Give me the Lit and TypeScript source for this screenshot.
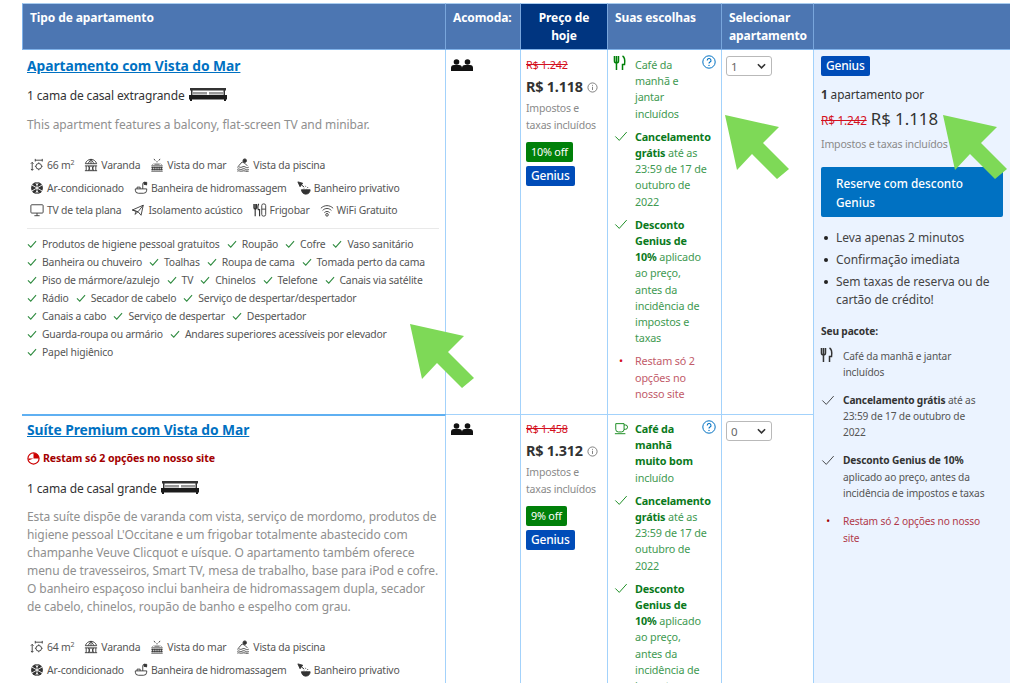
import { LitElement, html, css, svg } from "lit";
import { customElement } from "lit/decorators.js";

const ICONS: Record<string, any> = {
  size: svg`<path d="M2.500 5v9M1 6.500 2.500 5 4 6.500M1 12.500 2.500 14 4 12.500M6 2.500h8M6 1v3M14 1v3"/><circle cx="10" cy="9.500" r="3.200"/><path d="M10 5v1.300M10 12.700V14M5.600 9.500h1.200M13.200 9.500h1.200"/>`,
  balcony: svg`<path d="M1.500 6.500C2.500 3.500 5 1.500 8 1.500s5.500 2 6.500 5zM4.500 6.500 8 1.500l3.500 5M8 1.500v5M1 9h14M1 14.500h14M2.500 9v5.500M5 9l2 5.500M7 9l-2 5.500M9 9l2 5.500M11 9l-2 5.500M13.500 9v5.500"/>`,
  sea: svg`<path d="M4.500 1 6 3M11.500 1 10 3M8 3.500v1.500M5 7h6M1.500 9h13M1.500 11h13M1.500 13h13M1.500 15h13M3 10v4M5.500 10v4M8 10v4M10.500 10v4M13 10v4"/><path d="M3 7.500l1-1M13 7.500l-1-1"/>`,
  pool: svg`<circle cx="10" cy="3" r="2" fill="currentColor"/><path d="M3 9 7 4.500l3 1.500 3 3M1.500 10.500c2-1.500 3 1 5 0s3-1 4.500 0 2.500.500 3.500 0M1.500 13c2-1.500 3 1 5 0s3-1 4.500 0 2.500.500 3.500 0M1.500 15c2-1 3 .500 5 0s3-.500 4.500 0 2.500.300 3.500 0"/>`,
  snow: svg`<circle cx="8" cy="8" r="6.800" fill="currentColor" stroke="none"/><path stroke="#fff" d="M8 1.500v13M2.300 4.700l11.400 6.600M13.700 4.700 2.300 11.300M6.500 3 8 4.500 9.500 3M6.500 13 8 11.500 9.500 13"/>`,
  tub: svg`<path d="M1.500 9h13v1.500a3.500 3.500 0 0 1-3.500 3.500H5a3.500 3.500 0 0 1-3.500-3.500zM10 9V3.500a2 2 0 0 1 4 0V5M3.500 9V7h3.500v2"/><path d="M11.500 1.500h3v2.500h-3z" fill="currentColor"/>`,
  bath: svg`<path d="M1 1l5.500 1.500-3 4z" fill="currentColor"/><path d="M3 2l5 5"/><path d="M5 10h10c0 2.500-1.500 5-5 5s-4.500-2.500-5-5z" fill="currentColor"/><path d="M7 6l.500 1M9.500 5.500l.500 1M12 7l.500 1M8 8.500v.500M11 9v.500"/>`,
  tv: svg`<rect x="1" y="2" width="14" height="9.500" rx="1"/><path d="M5 14.500h6M8 11.500v3"/>`,
  sound: svg`<path d="M1.500 8 14 2.500 11.500 14 8 10zM14 2.500 8 10M1.500 8 6 9.500 4.500 13 8 10"/>`,
  fridge: svg`<path d="M1 1v4.500a1.500 1.500 0 0 0 3 0V1M2.500 1v14M6.500 1c-1 2-1 5-.500 6.500H7.500V15" stroke-width="1.300"/><rect x="10" y="1" width="4.500" height="14" rx="2"/><path d="M10 7h4.500"/>`,
  wifi: svg`<path d="M1 6c4-4 10-4 14 0M3 8.500c3-3 7-3 10 0M5 11c2-1.800 4-1.800 6 0"/><circle cx="8" cy="13.500" r="1.500"/>`,
  food: svg`<path d="M1.500 1v5a2 2 0 0 0 4 0V1M3.500 1v14" stroke-width="1.500"/><path d="M9.500 1c2 1 2.500 5 2 8.500H9.500V15" stroke-width="1.500"/>`,
  cup: svg`<path d="M2 3h9.500v6.500a3 3 0 0 1-3 3h-3.500a3 3 0 0 1-3-3zM11.500 4.500h1.500a1.500 1.500 0 0 1 0 5h-1.500M1 14.500h12"/>`,
  check: svg`<path d="M1.500 8.500 6 13 14.500 3.500"/>`,
};

const ic = (name: string, cls = "ic") =>
  html`<svg class=${cls} viewBox="0 0 16 16" fill="none" stroke="currentColor" stroke-width="1" aria-hidden="true">${ICONS[name]}</svg>`;

const FACILITY_ROWS = (m2: string): [string, any][][] => [
  [["size", html`${m2} m<sup>2</sup>`], ["balcony", "Varanda"], ["sea", "Vista do mar"], ["pool", "Vista da piscina"]],
  [["snow", "Ar-condicionado"], ["tub", "Banheira de hidromassagem"], ["bath", "Banheiro privativo"]],
  [["tv", "TV de tela plana"], ["sound", "Isolamento acústico"], ["fridge", "Frigobar"], ["wifi", "WiFi Gratuito"]],
];

const AMENITIES = [
  ["Produtos de higiene pessoal gratuitos", "Roupão", "Cofre", "Vaso sanitário"],
  ["Banheira ou chuveiro", "Toalhas", "Roupa de cama", "Tomada perto da cama"],
  ["Piso de mármore/azulejo", "TV", "Chinelos", "Telefone", "Canais via satélite"],
  ["Rádio", "Secador de cabelo", "Serviço de despertar/despertador"],
  ["Canais a cabo", "Serviço de despertar", "Despertador"],
  ["Guarda-roupa ou armário", "Andares superiores acessíveis por elevador"],
  ["Papel higiênico"],
];

const bedIcon = html`<svg class="bed" viewBox="0 0 38 14" aria-hidden="true">
  <path d="M1 1h36v2.500H1z" fill="#333"/><path d="M2 3h1.500v5H2zM34.500 3H36v5h-1.500z" fill="#333"/>
  <path d="M4 5h14v2.500H4zM20 5h14v2.500H20z" fill="#999"/>
  <path d="M0 8h38v4.500H0z" fill="#1c1c1c"/><path d="M1 12h2v2H1zM35 12h2v2h-2z" fill="#1c1c1c"/>
</svg>`;

const peopleIcon = html`<svg class="people" viewBox="0 0 22 12" aria-hidden="true" fill="#111">
  <circle cx="5.500" cy="3" r="2.800"/><path d="M0 12V9a3 3 0 0 1 3-3h5a3 3 0 0 1 3 3v3z"/>
  <circle cx="16.500" cy="3" r="2.800"/><path d="M11 12V9a3 3 0 0 1 3-3h5a3 3 0 0 1 3 3v3z"/>
</svg>`;

const chevron = html`<svg class="chev" viewBox="0 0 10 6" fill="none" stroke="#333" stroke-width="1.800" aria-hidden="true"><path d="M1 1l4 4 4-4"/></svg>`;

const helpIcon = html`<svg class="help" viewBox="0 0 14 14" fill="none" aria-hidden="true">
  <circle cx="7" cy="7" r="6.200" stroke="#0071c2"/>
  <path d="M5.200 5.400a1.900 1.900 0 1 1 2.800 1.700c-.7.400-1 .7-1 1.500" stroke="#0071c2" stroke-width="1.100"/>
  <circle cx="7" cy="10.400" r=".7" fill="#0071c2"/>
</svg>`;

const infoIcon = html`<svg class="info" viewBox="0 0 12 12" fill="none" aria-hidden="true">
  <circle cx="6" cy="6" r="5" stroke="#777"/><path d="M6 5.200v3.500" stroke="#777"/><circle cx="6" cy="3.500" r=".6" fill="#777"/>
</svg>`;

@customElement("app-root")
export class AppRoot extends LitElement {
  static styles = css`
    :host {
      display: block;
      height: 683px;
      overflow: hidden;
      background: #fff;
      font-family: "Noto Sans", "Open Sans", sans-serif;
      color: #333;
      position: relative;
    }
    .table {
      display: grid;
      grid-template-columns: 424px 75px 87px 114px 92px 196px;
      grid-template-rows: 47px 364px 400px;
      margin: 3px 0 0 22px;
      width: 988px;
    }
    .th {
      background: #4c76b2;
      color: #fff;
      font-weight: 700;
      font-size: 12px;
      line-height: 18px;
      letter-spacing: -0.1px;
      padding: 5px 7px 0;
      border-top: 1px solid #a9cdf0;
      border-right: 1px solid #79a6dc;
      border-bottom: 1px solid #7fb2ea;
    }
    .th.first { border-left: 1px solid #7fb2ea; }
    .th.today { background: #003580; text-align: center; }
    .th.last { border-right: none; }
    .td {
      border-right: 1px solid #a3d2fb;
      min-width: 0;
      overflow: hidden;
    }
    .next { border-top: 1px solid #a3d2fb; }
    .room { padding: 6px 6px 0 5px; }
    .room.next { border-top: 2px solid #5fb0f2; padding-top: 4px; }
    .title {
      display: block;
      color: #0071c2;
      font-weight: 700;
      font-size: 13.800px;
      line-height: 20px;
      letter-spacing: -0.05px;
      text-decoration: underline;
    }
    .alert {
      display: flex;
      align-items: center;
      gap: 3px;
      margin-top: 10px;
      color: #a30000;
      font-weight: 700;
      font-size: 10.600px;
      line-height: 16px;
      letter-spacing: -0.1px;
    }
    .pie { width: 13px; height: 13px; flex: none; }
    .bed-line {
      display: flex;
      align-items: center;
      gap: 4px;
      margin-top: 10px;
      font-size: 12px;
      line-height: 20px;
      letter-spacing: -0.13px;
    }
    .alert + .bed-line { margin-top: 13px; }
    .bed { width: 38px; height: 14px; flex: none; margin-top: -4px; }
    .desc {
      margin: 10px 0 0;
      color: #8f8f8f;
      font-size: 12px;
      line-height: 18px;
      letter-spacing: -0.08px;
    }
    .alert ~ .desc { margin-top: 9px; }
    .facilities { margin-top: 20px; }
    .f-row {
      display: flex;
      gap: 10px;
      padding-left: 3px;
      height: 22.500px;
      align-items: center;
      font-size: 10.400px;
      letter-spacing: -0.2px;
      color: #555;
      white-space: nowrap;
    }
    .f-item { display: flex; align-items: center; gap: 3px; }
    .f-item sup { font-size: 7px; line-height: 0; vertical-align: super; }
    .ic { width: 14px; height: 14px; flex: none; color: #333; }
    hr {
      margin: 6px 0 0;
      border: 0;
      border-top: 1px solid #e9e9e9;
    }
    .amen { margin-top: 6px; }
    .a-row {
      display: flex;
      gap: 7px;
      height: 18px;
      align-items: center;
      font-size: 10.400px;
      letter-spacing: -0.2px;
      color: #555;
      white-space: nowrap;
    }
    .a-item { display: flex; align-items: center; gap: 5px; }
    .a-check { width: 10px; height: 10px; flex: none; color: #2d8a3e; stroke-width: 1.700; }
    .people-cell { padding: 9px 0 0 5px; }
    .people-cell.next { padding-top: 8px; }
    .people { display: block; width: 22px; height: 12px; }
    .price { padding: 6px 0 0 5px; }
    .price.next { padding-top: 5px; }
    .old {
      color: #d4111e;
      text-decoration: line-through;
      font-size: 10.800px;
      line-height: 18px;
      letter-spacing: -0.2px;
    }
    .now {
      display: flex;
      align-items: center;
      gap: 4px;
      margin-top: 2px;
      font-size: 14.400px;
      font-weight: 700;
      line-height: 22px;
      letter-spacing: -0.2px;
      white-space: nowrap;
    }
    .info { width: 11px; height: 11px; flex: none; }
    .taxes {
      margin-top: 2px;
      color: #8a8a8a;
      font-size: 10.500px;
      line-height: 17px;
      letter-spacing: -0.2px;
    }
    .off {
      display: block;
      width: fit-content;
      margin-top: 8px;
      padding: 0 5px;
      background: #008009;
      border-radius: 2px;
      color: #fff;
      font-size: 10.800px;
      line-height: 20px;
      letter-spacing: -0.2px;
    }
    .genius {
      display: block;
      width: fit-content;
      background: #004cb8;
      border-radius: 2px;
      color: #fff;
      font-size: 12px;
      font-weight: 500;
      line-height: 20px;
      padding: 0 5px;
      letter-spacing: -0.2px;
    }
    .price .genius { margin-top: 4px; }
    .choices { position: relative; padding: 7px 2px 0 6px; }
    .choices.next { padding-top: 6px; }
    .help { position: absolute; top: 5px; right: 5px; width: 14px; height: 14px; }
    .choice {
      display: flex;
      gap: 7px;
      margin-bottom: 7px;
      color: #3f9a52;
      font-size: 10.800px;
      line-height: 16.200px;
      letter-spacing: -0.15px;
      white-space: nowrap;
    }
    .choice b { color: #0a7a1c; }
    .choice .ico {
      width: 14px;
      height: 14px;
      flex: none;
      color: #008009;
    }
    .ico.food { transform: translateY(-1px) scale(1.15); }
    .choice .bullet {
      width: 14px;
      flex: none;
      text-align: center;
      color: #d4111e;
    }
    .choice.red { color: #c25b6a; }
    .sel { padding: 6px 0 0 4px; }
    .select-wrap { position: relative; width: 46px; height: 20px; }
    select {
      appearance: none;
      width: 46px;
      height: 20px;
      border: 1px solid #b9b9b9;
      border-radius: 3px;
      background: #fff;
      color: #666;
      font: 11.500px "Noto Sans", sans-serif;
      padding: 0 0 0 4px;
      display: block;
    }
    .chev { position: absolute; right: 6px; top: 7px; width: 9px; height: 6px; pointer-events: none; }
    .panel {
      grid-row: 2 / span 2;
      grid-column: 6;
      background: #ebf3ff;
      padding: 6px 7px 0 7px;
      overflow: hidden;
    }
    .qty {
      margin-top: 8px;
      font-size: 11.800px;
      line-height: 20px;
      letter-spacing: -0.1px;
    }
    .totals { display: flex; align-items: baseline; gap: 4px; white-space: nowrap; margin-top: 3px; }
    .totals .struck {
      color: #d4111e;
      font-size: 11.800px;
      text-decoration: line-through;
      letter-spacing: -0.2px;
    }
    .totals .amount { font-size: 16.800px; line-height: 24px; letter-spacing: 0; }
    .incl {
      margin-top: 5px;
      color: #8a8a8a;
      font-size: 10.600px;
      line-height: 16px;
      letter-spacing: -0.2px;
      white-space: nowrap;
    }
    .cta {
      margin-top: 15px;
      width: 182px;
      height: 50px;
      box-sizing: border-box;
      padding: 7px 15px;
      background: #0071c2;
      border-radius: 2px;
      color: #fff;
      font-size: 11.800px;
      font-weight: 500;
      line-height: 19px;
      letter-spacing: 0;
    }
    ul.why {
      list-style: none;
      margin: 12px 0 0;
      padding: 0 0 0 15px;
      font-size: 12px;
      line-height: 17.500px;
      letter-spacing: -0.05px;
      color: #444;
    }
    ul.why li { position: relative; margin-bottom: 4.500px; }
    ul.why li::before {
      content: "";
      position: absolute;
      left: -12px;
      top: 7px;
      width: 4px;
      height: 4px;
      border-radius: 50%;
      background: #222;
    }
    .pack-title {
      margin-top: 15px;
      font-size: 10.200px;
      font-weight: 700;
      line-height: 16px;
      letter-spacing: -0.15px;
    }
    .pack {
      display: flex;
      gap: 8px;
      color: #555;
      font-size: 10.200px;
      line-height: 16.300px;
      letter-spacing: -0.15px;
      margin-bottom: 12px;
      white-space: nowrap;
    }
    .pack:first-child { margin-bottom: 11px; }
    .pack b { color: #333; }
    .pack .ico { width: 14px; height: 14px; flex: none; color: #333; margin-top: 1px; }
    .pack .bullet { width: 14px; flex: none; text-align: center; color: #a30000; }
    .pack.red { color: #b0394a; }
    .pack-list { margin-top: 9px; }
    .arrow { position: absolute; width: 64px; height: 74px; pointer-events: none; }
    .arrow.a { left: 410px; top: 324px; }
    .arrow.b { left: 725px; top: 115px; }
    .arrow.c { left: 943px; top: 115px; }
  `;

  private facilities(m2: string) {
    return html`<div class="facilities">
      ${FACILITY_ROWS(m2).map(
        (row) => html`<div class="f-row">
          ${row.map(([i, t]) => html`<span class="f-item">${ic(i)}<span>${t}</span></span>`)}
        </div>`
      )}
    </div>`;
  }

  private arrow(cls: string) {
    return html`<svg class="arrow ${cls}" viewBox="0 0 64 74" aria-hidden="true">
      <path d="M0 0 54 12 38 28 64 54 52 64 27 39 12 55z" fill="#7ed957"/>
    </svg>`;
  }

  private select(v: string) {
    return html`<div class="sel"><div class="select-wrap">
      <select aria-label="Selecionar apartamento"><option>${v}</option></select>${chevron}
    </div></div>`;
  }

  private cancel() {
    return html`<div class="choice">${ic("check", "ico")}<span><b>Cancelamento<br />grátis</b> até as<br />23:59 de 17 de<br />outubro de<br />2022</span></div>
      <div class="choice">${ic("check", "ico")}<span><b>Desconto<br />Genius de<br />10%</b> aplicado<br />ao preço,<br />antes da<br />incidência de<br />impostos e<br />taxas</span></div>`;
  }

  render() {
    return html`
      <div class="table">
        <div class="th first">Tipo de apartamento</div>
        <div class="th">Acomoda:</div>
        <div class="th today">Preço de hoje</div>
        <div class="th">Suas escolhas</div>
        <div class="th">Selecionar apartamento</div>
        <div class="th last"></div>

        <div class="td room">
          <a class="title">Apartamento com Vista do Mar</a>
          <div class="bed-line"><span>1 cama de casal extragrande</span>${bedIcon}</div>
          <p class="desc">This apartment features a balcony, flat-screen TV and minibar.</p>
          ${this.facilities("66")}
          <hr />
          <div class="amen">
            ${AMENITIES.map(
              (row) => html`<div class="a-row">
                ${row.map((t) => html`<span class="a-item">${ic("check", "a-check")}<span>${t}</span></span>`)}
              </div>`
            )}
          </div>
        </div>
        <div class="td people-cell">${peopleIcon}</div>
        <div class="td price">
          <div class="old">R$ 1.242</div>
          <div class="now">R$ 1.118 ${infoIcon}</div>
          <div class="taxes">Impostos e<br />taxas incluídos</div>
          <span class="off">10% off</span>
          <span class="genius">Genius</span>
        </div>
        <div class="td choices">
          ${helpIcon}
          <div class="choice">${ic("food", "ico food")}<span>Café da<br />manhã e<br />jantar<br />incluídos</span></div>
          ${this.cancel()}
          <div class="choice red"><span class="bullet">•</span><span>Restam só 2<br />opções no<br />nosso site</span></div>
        </div>
        <div class="td">${this.select("1")}</div>

        <div class="panel">
          <span class="genius">Genius</span>
          <div class="qty"><b>1</b> apartamento por</div>
          <div class="totals"><span class="struck">R$ 1.242</span><span class="amount">R$ 1.118</span></div>
          <div class="incl">Impostos e taxas incluídos</div>
          <div class="cta">Reserve com desconto<br />Genius</div>
          <ul class="why">
            <li>Leva apenas 2 minutos</li>
            <li>Confirmação imediata</li>
            <li>Sem taxas de reserva ou de<br />cartão de crédito!</li>
          </ul>
          <div class="pack-title">Seu pacote:</div>
          <div class="pack-list">
            <div class="pack">${ic("food", "ico food")}<span>Café da manhã e jantar<br />incluídos</span></div>
            <div class="pack">${ic("check", "ico")}<span><b>Cancelamento grátis</b> até as<br />23:59 de 17 de outubro de<br />2022</span></div>
            <div class="pack">${ic("check", "ico")}<span><b>Desconto Genius de 10%</b><br />aplicado ao preço, antes da<br />incidência de impostos e taxas</span></div>
            <div class="pack red"><span class="bullet">•</span><span>Restam só 2 opções no nosso<br />site</span></div>
          </div>
        </div>

        <div class="td room next">
          <a class="title">Suíte Premium com Vista do Mar</a>
          <div class="alert">
            <svg class="pie" viewBox="0 0 14 14" aria-hidden="true"><circle cx="7" cy="7" r="6" fill="#fff" stroke="#cc0000" stroke-width="1.300"/><path d="M7 1a6 6 0 0 1 6 6H7z" fill="#cc0000"/><path d="M7 7H1.500a5.500 5.500 0 0 0 .5 2z" fill="#cc0000"/></svg>
            <span>Restam só 2 opções no nosso site</span>
          </div>
          <div class="bed-line"><span>1 cama de casal grande</span>${bedIcon}</div>
          <p class="desc">Esta suíte dispõe de varanda com vista, serviço de mordomo, produtos de<br />higiene pessoal L'Occitane e um frigobar totalmente abastecido com<br />champanhe Veuve Clicquot e uísque. O apartamento também oferece<br />menu de travesseiros, Smart TV, mesa de trabalho, base para iPod e cofre.<br />O banheiro espaçoso inclui banheira de hidromassagem dupla, secador<br />de cabelo, chinelos, roupão de banho e espelho com grau.</p>
          ${this.facilities("64")}
        </div>
        <div class="td people-cell next">${peopleIcon}</div>
        <div class="td price next">
          <div class="old">R$ 1.458</div>
          <div class="now">R$ 1.312 ${infoIcon}</div>
          <div class="taxes">Impostos e<br />taxas incluídos</div>
          <span class="off">9% off</span>
          <span class="genius">Genius</span>
        </div>
        <div class="td choices next">
          ${helpIcon}
          <div class="choice">${ic("cup", "ico")}<span><b>Café da<br />manhã<br />muito bom</b><br />incluído</span></div>
          ${this.cancel()}
        </div>
        <div class="td next">${this.select("0")}</div>
      </div>
      ${this.arrow("a")}${this.arrow("b")}${this.arrow("c")}
    `;
  }
}
